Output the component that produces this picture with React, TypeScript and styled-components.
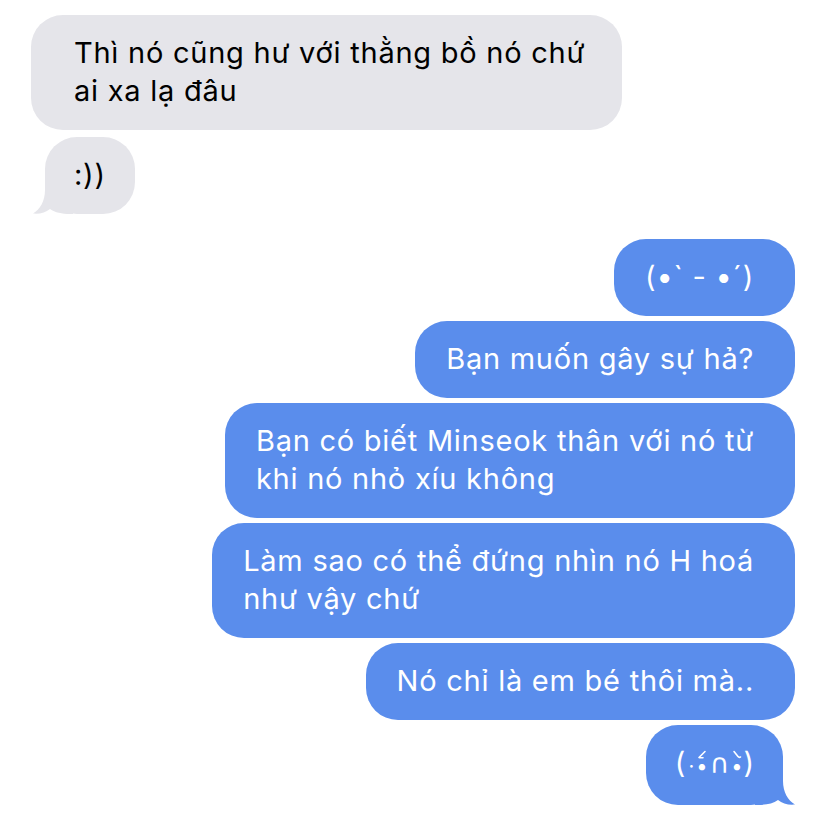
import React from 'react';
import styled, { createGlobalStyle, css } from 'styled-components';

type Side = 'in' | 'out';

const GREY = '#E5E5EA';
const BLUE = '#5A8DEC';

const Global = createGlobalStyle`
  html, body { margin: 0; padding: 0; background: #ffffff; }
  body {
    font-family: Inter, "Noto Sans", "DejaVu Sans", sans-serif;
    -webkit-font-smoothing: antialiased;
  }
`;

const Thread = styled.div`
  width: 828px;
  height: 824px;
  box-sizing: border-box;
  padding: 15px 33px 0 31px;
  display: flex;
  flex-direction: column;
  gap: 25px;
  overflow: hidden;
`;

const Group = styled.div<{ $side: Side; $gap: number }>`
  display: flex;
  flex-direction: column;
  gap: ${(p) => p.$gap}px;
  align-items: ${(p) => (p.$side === 'in' ? 'flex-start' : 'flex-end')};
`;

const Bubble = styled.div<{ $side: Side; $tail?: boolean }>`
  position: relative;
  box-sizing: border-box;
  padding: 19px 29px 20px;
  font-size: 29px;
  line-height: 38px;
  letter-spacing: 0.75px;
  white-space: nowrap;
  border-radius: 32px;
  background: ${(p) => (p.$side === 'in' ? GREY : BLUE)};
  color: ${(p) => (p.$side === 'in' ? '#000000' : '#ffffff')};
  ${(p) =>
    p.$tail
      ? p.$side === 'in'
        ? css`margin-left: 14px;`
        : css`margin-right: 12px;`
      : p.$side === 'in'
      ? css`padding-left: 43px; padding-right: 37px;`
      : css`padding-right: 41px; padding-left: 31px;`}
`;

const TailSvg = styled.svg<{ $side: Side }>`
  position: absolute;
  bottom: 0;
  width: 40px;
  height: 40px;
  fill: ${(p) => (p.$side === 'in' ? GREY : BLUE)};
  ${(p) =>
    p.$side === 'in'
      ? css`left: -12px; transform: scaleX(-1);`
      : css`right: -12px;`}
`;

const Tail: React.FC<{ side: Side }> = ({ side }) => (
  <TailSvg $side={side} viewBox="0 0 40 40" aria-hidden>
    <path d="M0 0 H28 V16 C28 27 33 35.5 40 39.6 C33 40.3 27.5 38.5 23 35 C18 38.6 11 40 3 40 H0 Z" />
  </TailSvg>
);

/* kaomoji parts */
const Kao = styled.span`
  display: inline-flex;
  align-items: baseline;
  letter-spacing: 0;
`;

const Eye = styled.span`
  position: relative;
  display: inline-block;
  font-size: 20px;
  line-height: 38px;
  padding: 0 1px;
`;

const BrowSvg = styled.svg`
  position: absolute;
  left: 50%;
  top: 3px;
  width: 10px;
  height: 9px;
  transform: translateX(-50%);
  fill: none;
  stroke: currentColor;
  stroke-width: 1.6;
  stroke-linecap: round;
`;

const Brow: React.FC<{ dir: 'left' | 'right' }> = ({ dir }) => (
  <BrowSvg viewBox="0 0 10 9" aria-hidden>
    {dir === 'left' ? (
      <path d="M2 7.5 L8 1.5 M2.5 7.8 H6" />
    ) : (
      <path d="M2 1.5 L6 6.5 Q7 7.8 8.5 7" />
    )}
  </BrowSvg>
);

const Small = styled.span`
  font-size: 20px;
  padding: 0 1px 0 3px;
`;

const Mouth = styled.span`
  font-size: 27px;
  padding: 0 1px;
`;

type Msg = { lines: React.ReactNode[]; tail?: boolean };

const Message: React.FC<{ side: Side; msg: Msg }> = ({ side, msg }) => (
  <Bubble $side={side} $tail={msg.tail}>
    {msg.lines.map((l, i) => (
      <React.Fragment key={i}>
        {i > 0 && <br />}
        {l}
      </React.Fragment>
    ))}
    {msg.tail && <Tail side={side} />}
  </Bubble>
);

const pout = (
  <Kao>
    (<Small>·</Small>
    <Eye>
      •<Brow dir="left" />
    </Eye>
    <Mouth>∩</Mouth>
    <Eye>
      •<Brow dir="right" />
    </Eye>
    )
  </Kao>
);

const received: Msg[] = [
  { lines: ['Thì nó cũng hư với thằng bồ nó chứ', 'ai xa lạ đâu'] },
  { lines: [':))'], tail: true },
];

const sent: Msg[] = [
  { lines: ['(•` - •´)'] },
  { lines: ['Bạn muốn gây sự hả?'] },
  { lines: ['Bạn có biết Minseok thân với nó từ', 'khi nó nhỏ xíu không'] },
  { lines: ['Làm sao có thể đứng nhìn nó H hoá', 'như vậy chứ'] },
  { lines: ['Nó chỉ là em bé thôi mà..'] },
  { lines: [pout], tail: true },
];

export default function App() {
  return (
    <>
      <Global />
      <Thread>
        <Group $side="in" $gap={7}>
          {received.map((m, i) => (
            <Message key={i} side="in" msg={m} />
          ))}
        </Group>
        <Group $side="out" $gap={5}>
          {sent.map((m, i) => (
            <Message key={i} side="out" msg={m} />
          ))}
        </Group>
      </Thread>
    </>
  );
}
